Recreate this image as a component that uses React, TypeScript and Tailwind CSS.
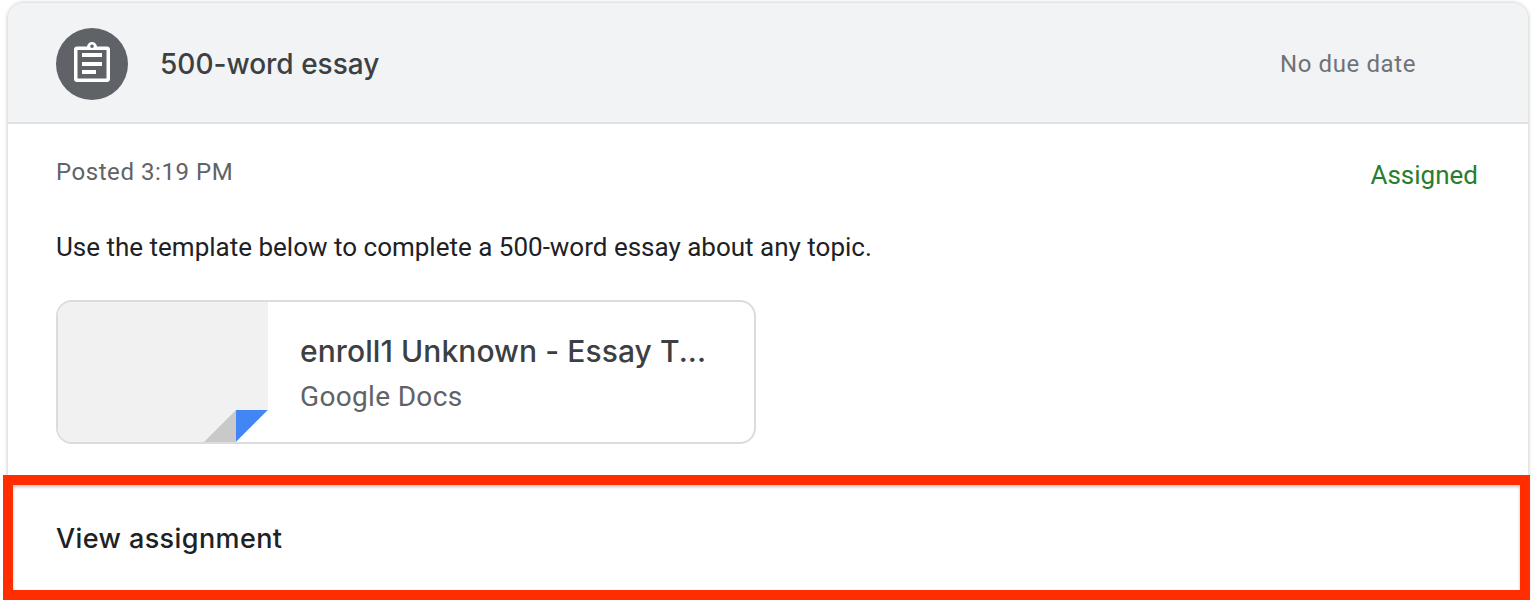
export default function App() {
  return (
    <div className="relative h-[600px] w-[1532px] overflow-hidden bg-white pt-[3px] pl-2 font-['Roboto',sans-serif]">
      <div className="h-[640px] w-[1520px] rounded-t-[16px] bg-white shadow-[0_0_4px_rgba(60,64,67,0.35)]">
        <header className="flex h-[121px] items-center justify-between rounded-t-[16px] border-b-2 border-[#e0e1e3] bg-[#f1f3f4] pt-[2px] pr-[112px] pl-12">
          <div className="flex items-center gap-8">
            <div className="flex h-[72px] w-[72px] items-center justify-center rounded-full bg-[#5f6368]">
              <svg className="overflow-visible" width="36" height="42" viewBox="0 2 36 42" fill="none">
                <path fillRule="evenodd" clipRule="evenodd" fill="#fff" d="M13 5.500C13.400 2.800 15.500 1 18 1s4.600 1.800 5 4.500h10c1.700 0 3 1.300 3 3V38c0 1.700-1.300 3-3 3H3c-1.700 0-3-1.300-3-3V8.500c0-1.700 1.300-3 3-3h10ZM3.500 9V37.500h29V9H3.500ZM18 3.500a1.800 1.800 0 1 0 0 3.600 1.800 1.800 0 0 0 0-3.600Z" />
                <rect x="8" y="12" width="20" height="4" fill="#fff" />
                <rect x="8" y="21" width="20" height="4" fill="#fff" />
                <rect x="8" y="29" width="14" height="4" fill="#fff" />
              </svg>
            </div>
            <h1 className="font-['Inter',sans-serif] text-[28px] font-medium text-[#3c4043]">500-word essay</h1>
          </div>
          <span className="text-[24px] tracking-[0.6px] text-[#6f7276]">No due date</span>
        </header>
        <main className="pt-[32px] pr-[50px] pl-12">
          <div className="flex items-start justify-between">
            <span className="text-[24px] leading-[32px] tracking-[0.55px] text-[#5f6368]">Posted 3:19 PM</span>
            <span className="pt-[3px] text-[26px] leading-[32px] text-[#2a7d2e]">Assigned</span>
          </div>
          <p className="mt-[40px] text-[26px] leading-[32px] text-[#202124]">Use the template below to complete a 500-word essay about any topic.</p>
          <div className="mt-[37px] flex h-[144px] w-[700px] overflow-hidden rounded-[16px] border-2 border-[#dadce0]">
            <div className="relative w-[210px] bg-[#f1f1f1]">
              <svg className="absolute right-0 bottom-0" width="64" height="32" viewBox="0 0 64 32">
                <polygon points="0,32 32,0 32,32" fill="#c9c9c9" />
                <polygon points="32,32 32,0 64,0" fill="#4285f4" />
                <polygon points="32,32 64,0 64,32" fill="#fff" />
              </svg>
            </div>
            <div className="min-w-0 flex-1 pt-[27px] pl-8">
              <div className="font-['Inter',sans-serif] text-[30px] leading-[44px] font-medium tracking-[0.08px] text-[#3c4043]">enroll1 Unknown - Essay T...</div>
              <div className="mt-[6px] text-[28px] leading-[36px] tracking-[0.33px] text-[#5f6368]">Google Docs</div>
            </div>
          </div>
        </main>
      </div>
      <div className="absolute top-[475px] left-[3px] h-[125px] w-[1527px] border-[10px] border-[#ff2d00] bg-white shadow-[inset_0_2px_3px_rgba(60,64,67,0.3)]">
        <div className="flex h-full items-center pt-[4px] pl-[43px] font-['Inter',sans-serif] text-[27px] font-medium tracking-[0.4px] text-[#202124]">View assignment</div>
      </div>
    </div>
  );
}
